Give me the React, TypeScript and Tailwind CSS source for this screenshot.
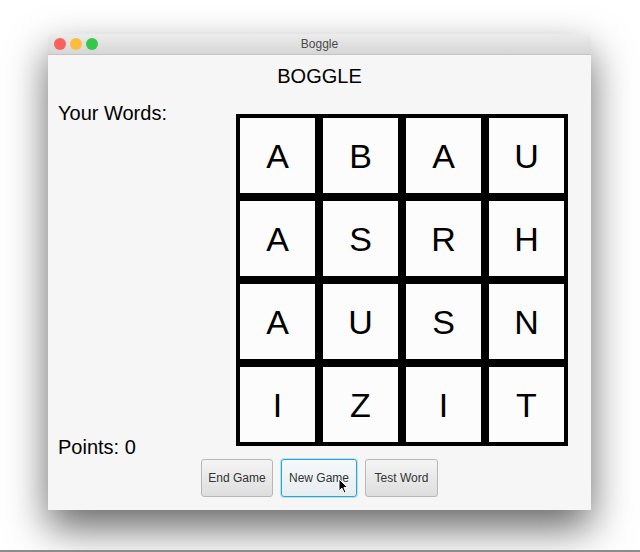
import React from "react";

const LETTERS = [
  ["A", "B", "A", "U"],
  ["A", "S", "R", "H"],
  ["A", "U", "S", "N"],
  ["I", "Z", "I", "T"],
];

const font = { fontFamily: '"Liberation Sans", Arial, sans-serif' };

function Cursor() {
  return (
    <svg
      className="absolute left-[56px] top-[18px]"
      width="11"
      height="16"
      viewBox="0 0 11 16"
    >
      <path
        d="M1 1 L1 13 L4 10.2 L6.2 15 L8 14.2 L5.9 9.6 L9.8 9.6 Z"
        fill="#000"
        stroke="#fff"
        strokeWidth="1"
        strokeLinejoin="round"
      />
    </svg>
  );
}

export default function App() {
  return (
    <div
      className="flex h-[552px] w-[640px] flex-col bg-white"
      style={font}
    >
      <div className="ml-[48px] mt-[34px] flex w-[543px] flex-col overflow-hidden rounded-t-[5px] bg-[#f6f6f6] shadow-[0_18px_40px_rgba(0,0,0,0.6)]">
        {/* title bar */}
        <div className="relative flex h-[21px] items-center border-b border-[#c4c4c4] bg-gradient-to-b from-[#ececec] to-[#d6d6d6] pl-[6px]">
          <div className="flex gap-[4px]">
            <span className="block h-[12px] w-[12px] rounded-full bg-[#fc605c]" />
            <span className="block h-[12px] w-[12px] rounded-full bg-[#fdbc40]" />
            <span className="block h-[12px] w-[12px] rounded-full bg-[#34c84a]" />
          </div>
          <div className="absolute inset-0 flex items-center justify-center text-[12px] text-[#4a4a4a]">
            Boggle
          </div>
        </div>

        {/* content */}
        <div className="flex flex-col px-[10px] pb-[13px] pt-[10px]">
          <div className="text-center text-[20px] leading-[23px] text-black">
            BOGGLE
          </div>
          <div className="mt-[11px] flex h-[360px]">
            <div className="flex w-[178px] flex-col justify-between text-[20px] leading-[23px] text-black">
              <div className="mt-[3px]">Your Words:</div>
              <div>Points: 0</div>
            </div>
            <div className="mt-[15px] grid h-[332px] w-[332px] grid-cols-4 grid-rows-4">
              {LETTERS.flat().map((l, i) => (
                <div
                  key={i}
                  className="flex h-[83px] w-[83px] items-center justify-center border-[4px] border-black bg-[#fcfcfc] text-[34px] leading-none text-black"
                >
                  {l}
                </div>
              ))}
            </div>
          </div>
          <div className="flex justify-center gap-[8px]">
            <button className="h-[38px] w-[72px] rounded-[3px] border border-[#b8b8b8] bg-gradient-to-b from-[#f4f4f4] to-[#dedede] text-[12px] text-[#333]">
              End Game
            </button>
            <button className="relative h-[38px] w-[76px] rounded-[3px] border border-[#2aa6d6] bg-gradient-to-b from-[#f6f9fb] to-[#e6edf1] text-[12px] text-[#333] shadow-[0_0_0_1px_rgba(80,180,225,0.35)]">
              New Game
              <Cursor />
            </button>
            <button className="h-[38px] w-[73px] rounded-[3px] border border-[#b8b8b8] bg-gradient-to-b from-[#f4f4f4] to-[#dedede] text-[12px] text-[#333]">
              Test Word
            </button>
          </div>
        </div>
      </div>
      <div className="flex-1" />
      <div className="h-[2px] w-full bg-[#8c8c8c]" />
    </div>
  );
}
